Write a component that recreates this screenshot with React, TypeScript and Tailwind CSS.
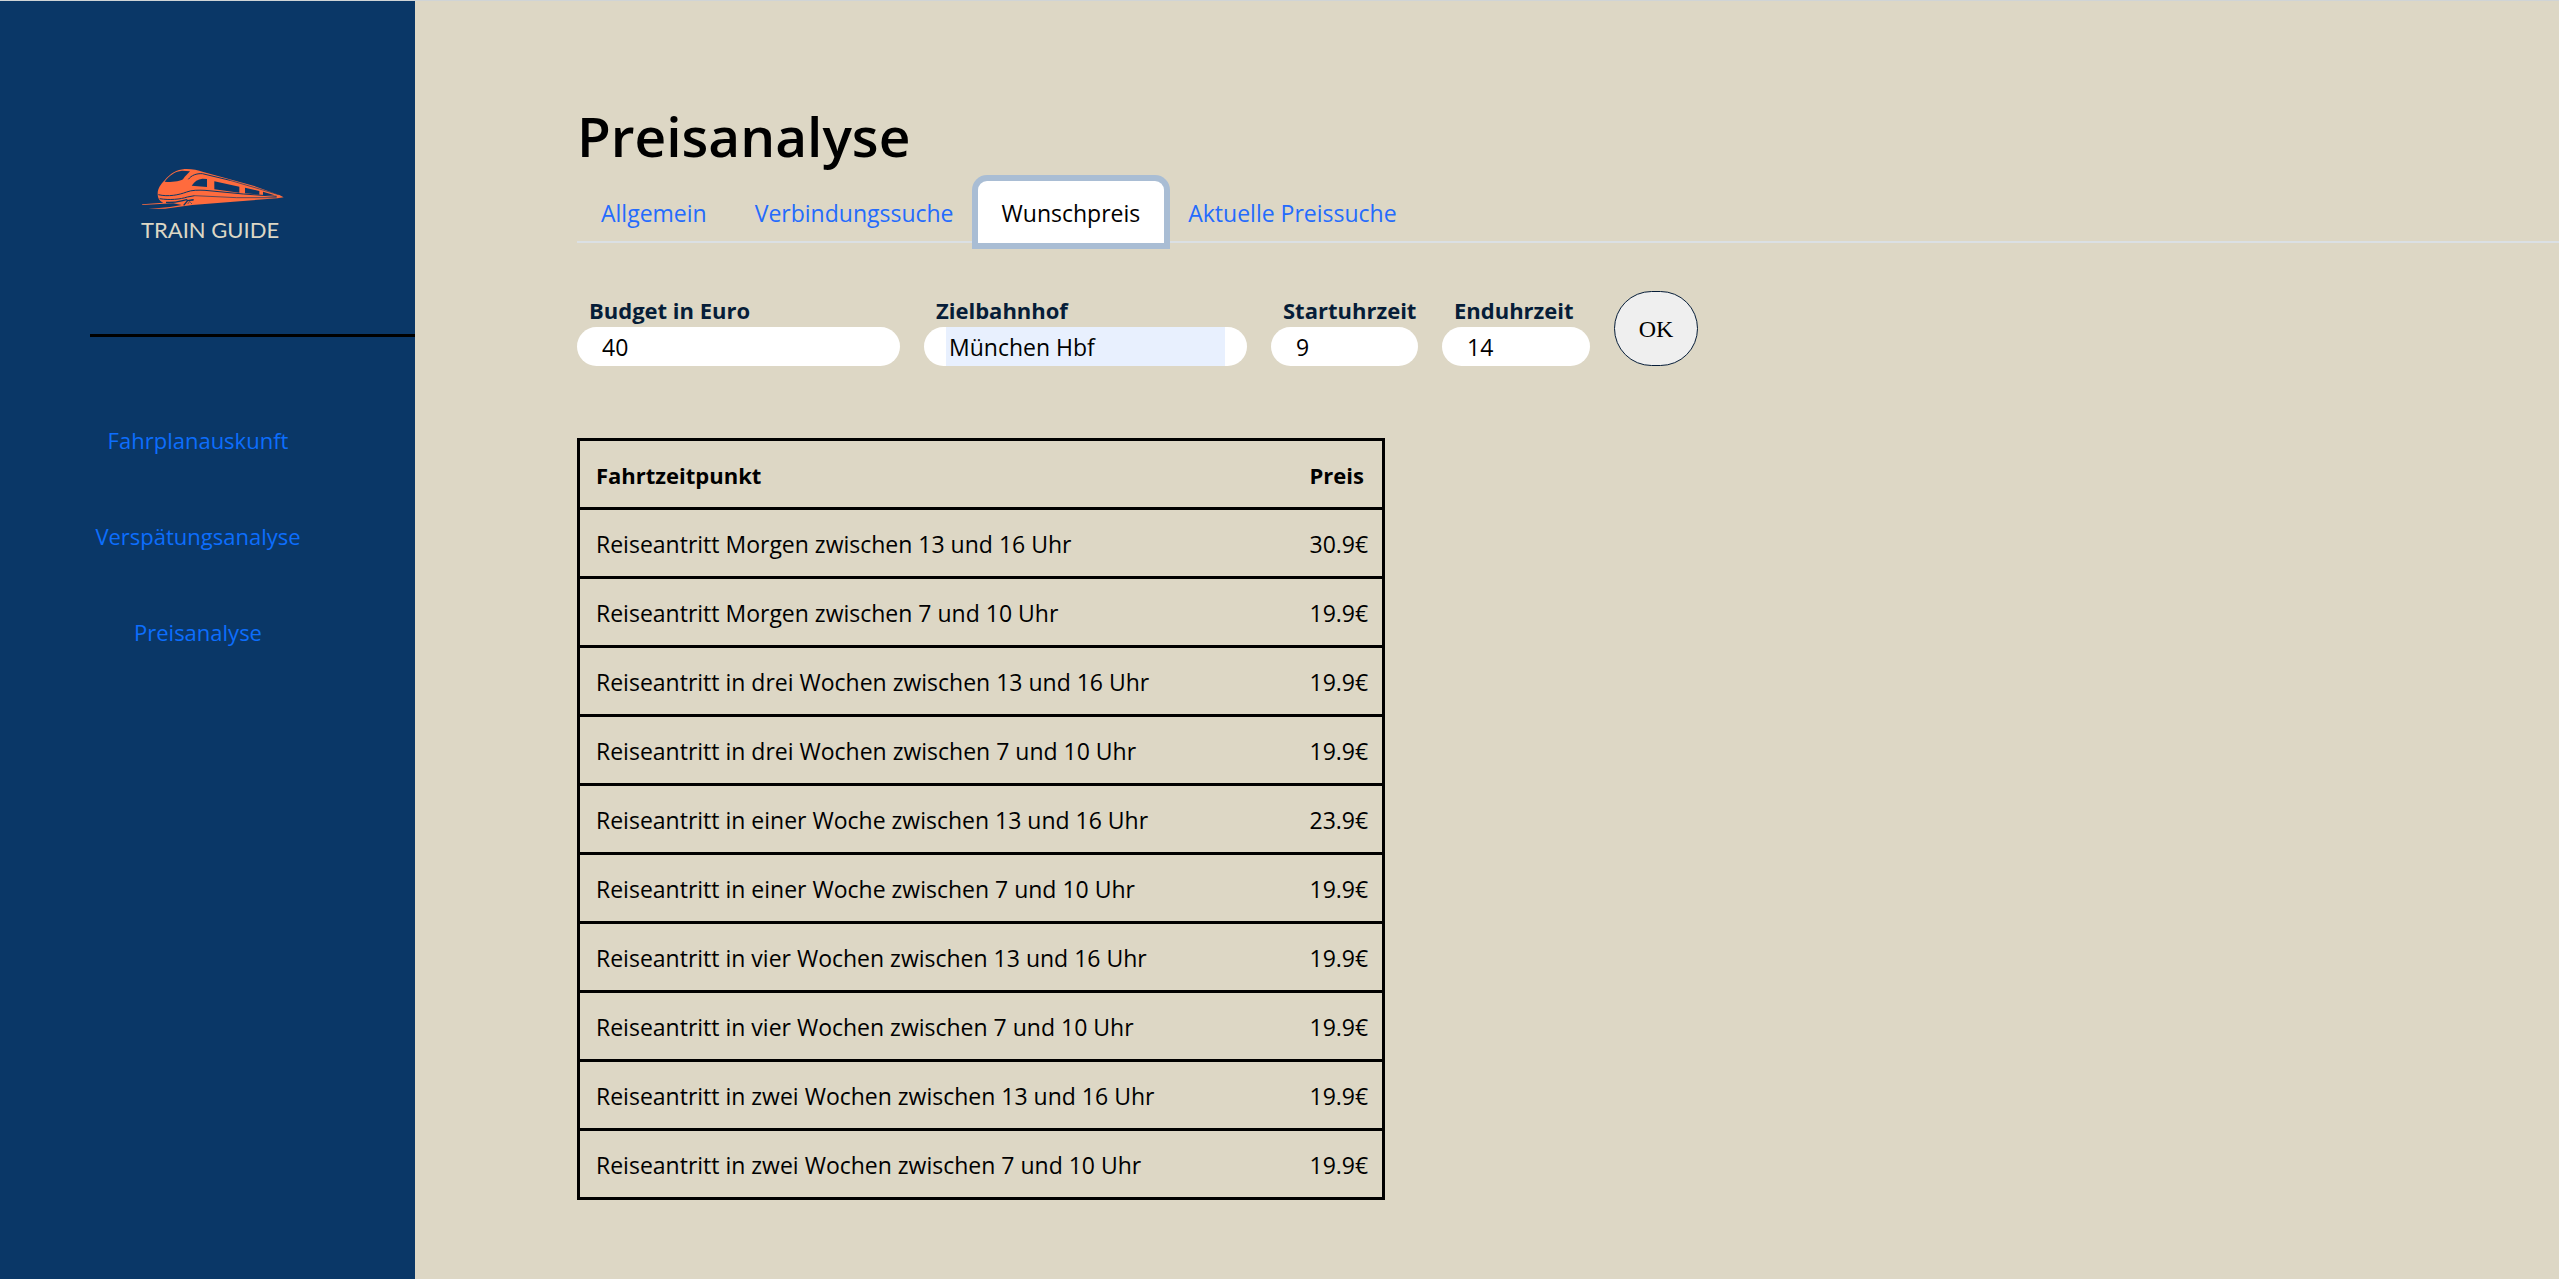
import React from 'react';

const navLinks = ['Fahrplanauskunft', 'Verspätungsanalyse', 'Preisanalyse'];

const tabs = ['Allgemein', 'Verbindungssuche', 'Wunschpreis', 'Aktuelle Preissuche'];

const rows = [
  ['Reiseantritt Morgen zwischen 13 und 16 Uhr', '30.9€'],
  ['Reiseantritt Morgen zwischen 7 und 10 Uhr', '19.9€'],
  ['Reiseantritt in drei Wochen zwischen 13 und 16 Uhr', '19.9€'],
  ['Reiseantritt in drei Wochen zwischen 7 und 10 Uhr', '19.9€'],
  ['Reiseantritt in einer Woche zwischen 13 und 16 Uhr', '23.9€'],
  ['Reiseantritt in einer Woche zwischen 7 und 10 Uhr', '19.9€'],
  ['Reiseantritt in vier Wochen zwischen 13 und 16 Uhr', '19.9€'],
  ['Reiseantritt in vier Wochen zwischen 7 und 10 Uhr', '19.9€'],
  ['Reiseantritt in zwei Wochen zwischen 13 und 16 Uhr', '19.9€'],
  ['Reiseantritt in zwei Wochen zwischen 7 und 10 Uhr', '19.9€'],
];

function TrainLogo() {
  return (
    <svg viewBox="63 54 432 126" className="h-[42px] w-36" aria-hidden="true">
      <path
        fill="#ff6b3d"
        d="M113 131C113 116 122 103 134 91C151 70 170 59 194 57C214 56 232 60 250 66L400 107L478 135L491 142L472 145L340 155L217 165L135 176L84 177L150 171L185 165L160 160L66 165L67 163L130 158C118 153 113 144 113 131Z"
      />
      <g fill="#0a3767">
        <path d="M134 95C147 76 166 64 186 62L210 64C202 72 196 78 191 85C189 93 160 98 134 95Z" />
        <path d="M215 107C223 94 234 87 247 86L261 87V111Z" />
        <path d="M283 94L358 110V128L283 118Z" />
        <path d="M375 113L418 123V134L375 130Z" />
        <path d="M429 125L464 136L429 135Z" />
      </g>
      <g fill="none" stroke="#0a3767">
        <path strokeWidth="3" d="M205 88C214 76 229 70 247 71L330 91" />
        <path strokeWidth="2" d="M330 91L476 134" />
        <path strokeWidth="3" d="M115 134C145 141 176 135 200 126C215 120 235 120 255 121L370 132L470 139" />
        <path strokeWidth="3" d="M119 146C148 151 181 148 202 141L224 137" />
        <path strokeWidth="2" d="M224 137L350 143L470 143" />
        <path strokeWidth="4" d="M138 157C163 160 185 152 202 149M191 166L203 152L221 149" />
        <path strokeWidth="2" d="M203 162L212 151L220 151M211 157L216 162" />
      </g>
    </svg>
  );
}

type FieldProps = {
  id: string;
  label: string;
  value: string;
  size: string;
  filled?: boolean;
};

function Field({ id, label, value, size, filled }: FieldProps) {
  return (
    <div className={size}>
      <label htmlFor={id} className="block pl-3 text-[22px] leading-[34px] font-bold whitespace-nowrap text-[#061d38]">
        {label}
      </label>
      <div className="h-[39px] rounded-[20px] bg-white px-[22px]">
        <input
          id={id}
          type="text"
          defaultValue={value}
          className={
            filled
              ? 'block h-full w-full bg-[#e8f0fe] px-[3px] text-[23px] text-black outline-none'
              : 'block h-full w-full px-[3px] text-[23px] text-black outline-none'
          }
        />
      </div>
    </div>
  );
}

export default function App() {
  return (
    <div className="flex min-h-screen border-t border-[#d0d4d6] bg-[#ddd7c5] font-['Open_Sans',sans-serif] text-[23px] leading-9 text-black">
      <aside className="w-[415px] shrink-0 bg-[#0a3767]">
        <a href="#" className="mt-[167px] ml-[141px] block w-36">
          <TrainLogo />
          <span className="mt-0.5 block font-['Lato',sans-serif] text-[22px] leading-9 whitespace-nowrap text-[#ddd7c5]">TRAIN GUIDE</span>
        </a>
        <hr className="mt-[86px] ml-[90px] border-t-3 border-black" />
        <nav className="mt-[85px] flex w-[396px] flex-col items-center gap-[60px] text-[22px] text-[#0d6efd]">
          {navLinks.map((link) => (
            <a key={link} href="#">
              {link}
            </a>
          ))}
        </nav>
      </aside>

      <main className="min-w-0 flex-1 pt-[99px] pb-[78px] pl-[162px]">
        <h1 className="text-[55px] leading-[72px] font-semibold">Preisanalyse</h1>

        <div role="tablist" className="mt-[9px] flex h-[62px] border-b-2 border-[#dbe0e4]">
          {tabs.map((tab) => (
            <button
              key={tab}
              type="button"
              role="tab"
              aria-selected={tab === 'Wunschpreis'}
              className={
                tab === 'Wunschpreis'
                  ? 'h-[62px] rounded-t-[9px] bg-white px-6 pt-0.5 text-black ring-6 ring-[#a9bdd4]'
                  : 'h-[62px] px-6 pt-0.5 text-[#246bfd]'
              }
            >
              {tab}
            </button>
          ))}
        </div>

        <form className="mt-12 flex items-end gap-6" onSubmit={(e) => e.preventDefault()}>
          <Field id="budget" label="Budget in Euro" value="40" size="w-[323px]" />
          <Field id="ziel" label="Zielbahnhof" value="München Hbf" size="w-[323px]" filled />
          <Field id="start" label="Startuhrzeit" value="9" size="w-[147px]" />
          <Field id="ende" label="Enduhrzeit" value="14" size="w-[148px]" />
          <button
            type="submit"
            className="h-[75px] w-[84px] rounded-[38px] border border-[#061d38] bg-[#efefef] font-['Liberation_Serif',serif] text-[24px] text-black"
          >
            OK
          </button>
        </form>

        <table className="mt-[72px] w-full max-w-[808px] table-fixed border-collapse border-3 border-black">
          <thead>
            <tr className="h-[69px] border-b-3 border-black">
              <th className="pt-0.5 pl-4 text-left text-[22px] font-bold">Fahrtzeitpunkt</th>
              <th className="w-[86px] pt-0.5 pl-3 text-left text-[22px] font-bold">Preis</th>
            </tr>
          </thead>
          <tbody>
            {rows.map(([time, price]) => (
              <tr key={time} className="h-[69px] border-b-3 border-black">
                <td className="pt-0.5 pl-4">{time}</td>
                <td className="pt-0.5 pl-3">{price}</td>
              </tr>
            ))}
          </tbody>
        </table>
      </main>
    </div>
  );
}
